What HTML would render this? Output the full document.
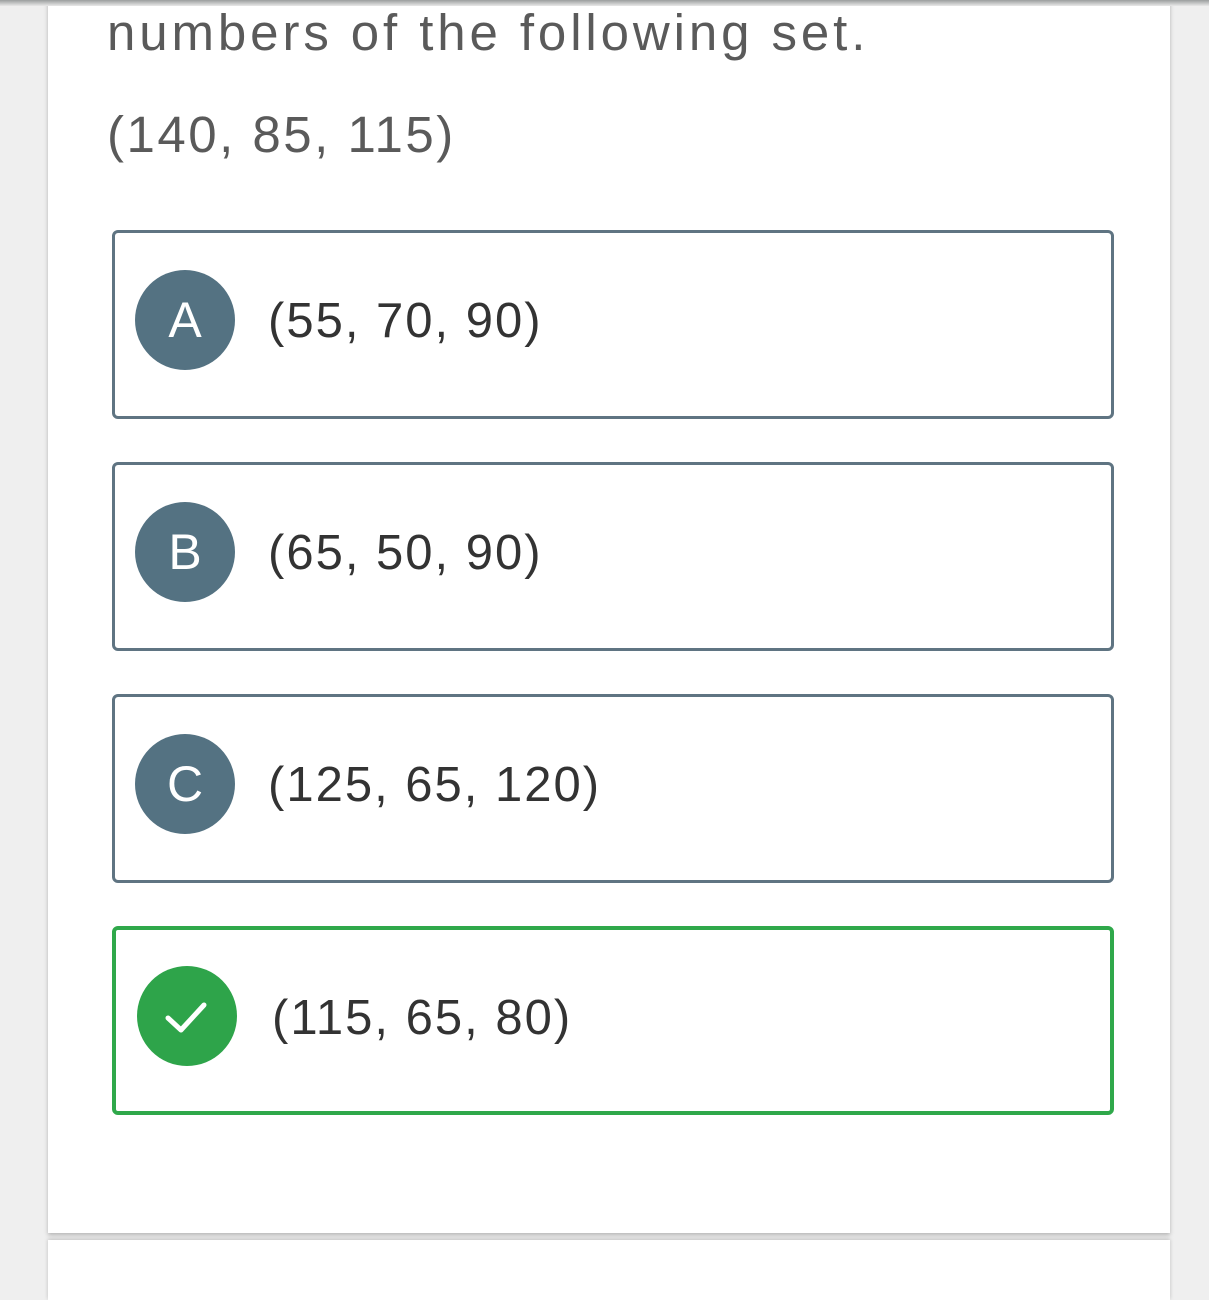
<!DOCTYPE html>
<html><head><style>
html,body{margin:0;padding:0;width:1209px;height:1280px;overflow:hidden;background:#efefef;font-family:"Liberation Sans",sans-serif;}
.card{position:absolute;left:48px;top:0;width:1122px;height:1233px;background:#fff;box-shadow:0 2px 4px rgba(0,0,0,.25);}
.card2{position:absolute;left:48px;top:1240px;width:1122px;height:60px;background:#fff;box-shadow:0 -1px 4px rgba(0,0,0,.2);}
.topbar{position:absolute;left:0;top:0;width:1209px;height:6px;background:linear-gradient(#9a9e9e,#e8e8e8);}
.t{position:absolute;left:107px;color:#5a5a5a;font-size:51px;}
.opt{position:absolute;left:112px;width:996px;height:183px;border:3px solid #5f7482;border-radius:6px;background:#fff;}
.opt.g{border:4px solid #2fa84a;width:994px;height:181px;}
.c{position:absolute;left:20px;top:37px;width:100px;height:100px;border-radius:50%;background:#547282;color:#fff;font-size:50px;text-align:center;line-height:100px;}
.g .c{background:#2ea44a;left:21px;top:36px;}
.v{position:absolute;left:153px;top:60px;font-size:49px;color:#333;letter-spacing:2px;line-height:56px;}
</style></head><body>
<div class="card"></div>
<div class="card2"></div>
<div class="topbar"></div>
<div class="t" style="top:0px;line-height:66px;letter-spacing:3.9px;">numbers of the following set.</div>
<div class="t" style="top:102px;line-height:66px;letter-spacing:2.5px;">(140, 85, 115)</div>
<div class="opt" style="top:230px"><div class="c">A</div><div class="v">(55, 70, 90)</div></div>
<div class="opt" style="top:462px"><div class="c">B</div><div class="v">(65, 50, 90)</div></div>
<div class="opt" style="top:694px"><div class="c">C</div><div class="v">(125, 65, 120)</div></div>
<div class="opt g" style="top:926px"><div class="c"><svg width="100" height="100" viewBox="0 0 100 100"><path d="M31 52 L44 64 L67 39" fill="none" stroke="#fff" stroke-width="5" stroke-linecap="round" stroke-linejoin="round"/></svg></div><div class="v" style="left:156px;">(115, 65, 80)</div></div>
</body></html>
